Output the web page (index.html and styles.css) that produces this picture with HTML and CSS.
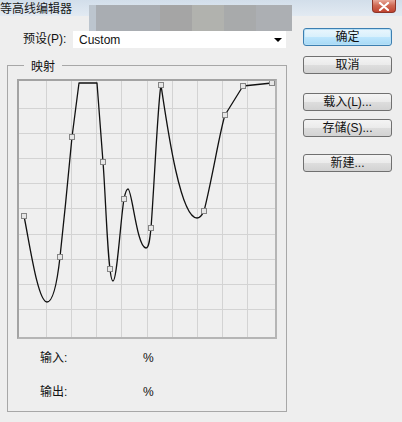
FILE: index.html
```html
<!DOCTYPE html>
<html lang="zh">
<head>
<meta charset="utf-8">
<title>等高线编辑器</title>
<link rel="stylesheet" href="styles.css">
</head>
<body>
<div class="dialog">
  <div class="titlebar">
    <span class="title">等高线编辑器</span>
    <span class="close"><svg width="14" height="9" viewBox="0 0 14 9"><path d="M3 1 L11 8 M11 1 L3 8" stroke="#fff" stroke-width="2.2" stroke-linecap="round"/></svg></span>
  </div>
  <div class="blur"></div>
  <div class="content">
    <div class="left">
      <div class="preset">
        <span class="preset-label">预设(P):</span>
        <div class="select"><span>Custom</span><span class="arrow"></span></div>
      </div>
      <div class="group">
        <span class="legend">映射</span>
        <div class="graph">
          <svg width="256" height="256" viewBox="19 81 256 256">
            <g stroke="#d3d3d3" stroke-width="1">
              <path d="M46.5 81V337M71.5 81V337M96.5 81V337M121.5 81V337M147.5 81V337M172.5 81V337M197.5 81V337M222.5 81V337M247.5 81V337"/>
              <path d="M19 108.5H275M19 133.5H275M19 158.5H275M19 183.5H275M19 208.5H275M19 234.5H275M19 259.5H275M19 284.5H275M19 309.5H275"/>
            </g>
            <path fill="none" stroke="#111" stroke-width="1.3" stroke-linejoin="round"
              d="M24,216 C30,246 38,302 47,302 C54,302 58,275 60,257 C64,220 69,170 72,137 L79,83 L97,83 L103,162 C106,200 108,281 113,281 C117,281 121,215 124,199 C125,194 126,189 128,189 C132,189 137,248 146,248 C149,248 150,238 151,228 C154,190 158,100 161,85 C167,125 180,218 197,218 C201,218 203,213 204,211 C212,180 220,130 225,115 L243,86 L272,83"/>
            <g fill="#e6e6e6" stroke="#858585" stroke-width="1">
              <rect x="21.5" y="213.5" width="5" height="5"/>
              <rect x="57.5" y="254.5" width="5" height="5"/>
              <rect x="69.5" y="134.5" width="5" height="5"/>
              <rect x="100.5" y="159.5" width="5" height="5"/>
              <rect x="107.5" y="266.5" width="5" height="5"/>
              <rect x="121.5" y="196.5" width="5" height="5"/>
              <rect x="148.5" y="225.5" width="5" height="5"/>
              <rect x="158.5" y="82.5" width="5" height="5"/>
              <rect x="201.5" y="208.5" width="5" height="5"/>
              <rect x="222.5" y="112.5" width="5" height="5"/>
              <rect x="240.5" y="83.5" width="5" height="5"/>
              <rect x="269.5" y="80.5" width="5" height="5"/>
            </g>
          </svg>
        </div>
        <div class="readouts">
          <span>输入:</span><span>%</span>
          <span>输出:</span><span>%</span>
        </div>
      </div>
    </div>
    <div class="right">
      <button class="btn btn-ok">确定</button>
      <button class="btn btn-cancel">取消</button>
      <button class="btn btn-load">载入(L)...</button>
      <button class="btn btn-save">存储(S)...</button>
      <button class="btn btn-new">新建...</button>
    </div>
  </div>
</div>
</body>
</html>
```

FILE: styles.css
```css
html, body {
  margin: 0;
  padding: 0;
}
body {
  width: 402px;
  height: 422px;
  overflow: hidden;
  background: #eeeeee;
  font-family: "Liberation Sans", "Noto Sans CJK SC", sans-serif;
  font-size: 12px;
  color: #111;
}
.dialog {
  position: relative;
  width: 402px;
  height: 422px;
}
.titlebar {
  height: 16px;
  display: flex;
  justify-content: space-between;
  align-items: flex-start;
  background: linear-gradient(#d2deea, #e2eaf2);
}
.title {
  font-family: "Noto Sans CJK SC", sans-serif;
  font-size: 12px;
  line-height: 15px;
  color: #1a1a1a;
}
.close {
  width: 24px;
  height: 13px;
  margin-right: 6px;
  box-sizing: border-box;
  border: 1px solid #8d3528;
  border-top: none;
  border-radius: 0 0 4px 4px;
  background: linear-gradient(#e9a99a, #cf6a55 45%, #c0432f);
  display: flex;
  align-items: center;
  justify-content: center;
}
.blur {
  position: absolute;
  left: 89px;
  top: 5px;
  width: 203px;
  height: 26px;
  background: linear-gradient(90deg, #bcc5ce 0 7px, #a9adb2 7px 71px, #a5a5a5 71px 103px, #b1b2ae 103px 135px, #a8aaab 135px 167px, #acafb3 167px 203px);
}
.content {
  display: flex;
}
.left {
  width: 287px;
}
.preset {
  margin-top: 15px;
  height: 17px;
  display: flex;
  align-items: center;
}
.preset-label {
  margin-left: 23px;
  width: 50px;
  line-height: 17px;
}
.select {
  width: 213px;
  height: 17px;
  background: #fff;
  display: flex;
  align-items: center;
  justify-content: space-between;
  box-sizing: border-box;
  padding: 0 4px 0 6px;
}
.arrow {
  width: 0;
  height: 0;
  border-left: 4px solid transparent;
  border-right: 4px solid transparent;
  border-top: 4px solid #000;
  margin-top: 1px;
}
.group {
  position: relative;
  margin-top: 17px;
  margin-left: 7px;
  width: 269px;
  height: 332px;
  border: 1px solid #a7a7a7;
  padding: 13px 0 0 9px;
}
.legend {
  position: absolute;
  left: 16px;
  top: -8px;
  padding: 0 7px;
  background: #eeeeee;
  font-family: "Noto Sans CJK SC", sans-serif;
  line-height: 15px;
}
.graph {
  width: 256px;
  height: 256px;
  border: 2px solid #a3a3a3;
  border-right-color: #b5b5b5;
  border-bottom-color: #b5b5b5;
  background: #efefef;
}
.graph svg {
  display: block;
}
.readouts {
  margin-top: 11px;
  margin-left: 23px;
  display: grid;
  grid-template-columns: 103px auto;
  row-gap: 18px;
  line-height: 16px;
}
.right {
  margin-left: 16px;
  display: flex;
  flex-direction: column;
}
.btn {
  width: 89px;
  height: 18px;
  padding: 0;
  font-family: "Liberation Sans", "Noto Sans CJK SC", sans-serif;
  font-size: 12px;
  line-height: 16px;
  color: #111;
  border: 1px solid #707070;
  border-radius: 3px;
  background: linear-gradient(#f4f4f4 0%, #ebebeb 48%, #dddddd 52%, #d2d2d2 100%);
}
.btn-ok {
  margin-top: 12px;
  border-color: #3c7fb1;
  box-shadow: inset 0 0 0 1px #b8e0f6;
  background: linear-gradient(#eaf6fd 0%, #d9f0fc 48%, #bee6fd 52%, #a7d9f5 100%);
}
.btn-cancel { margin-top: 10px; }
.btn-load { margin-top: 19px; }
.btn-save { margin-top: 8px; }
.btn-new { margin-top: 17px; }
```
